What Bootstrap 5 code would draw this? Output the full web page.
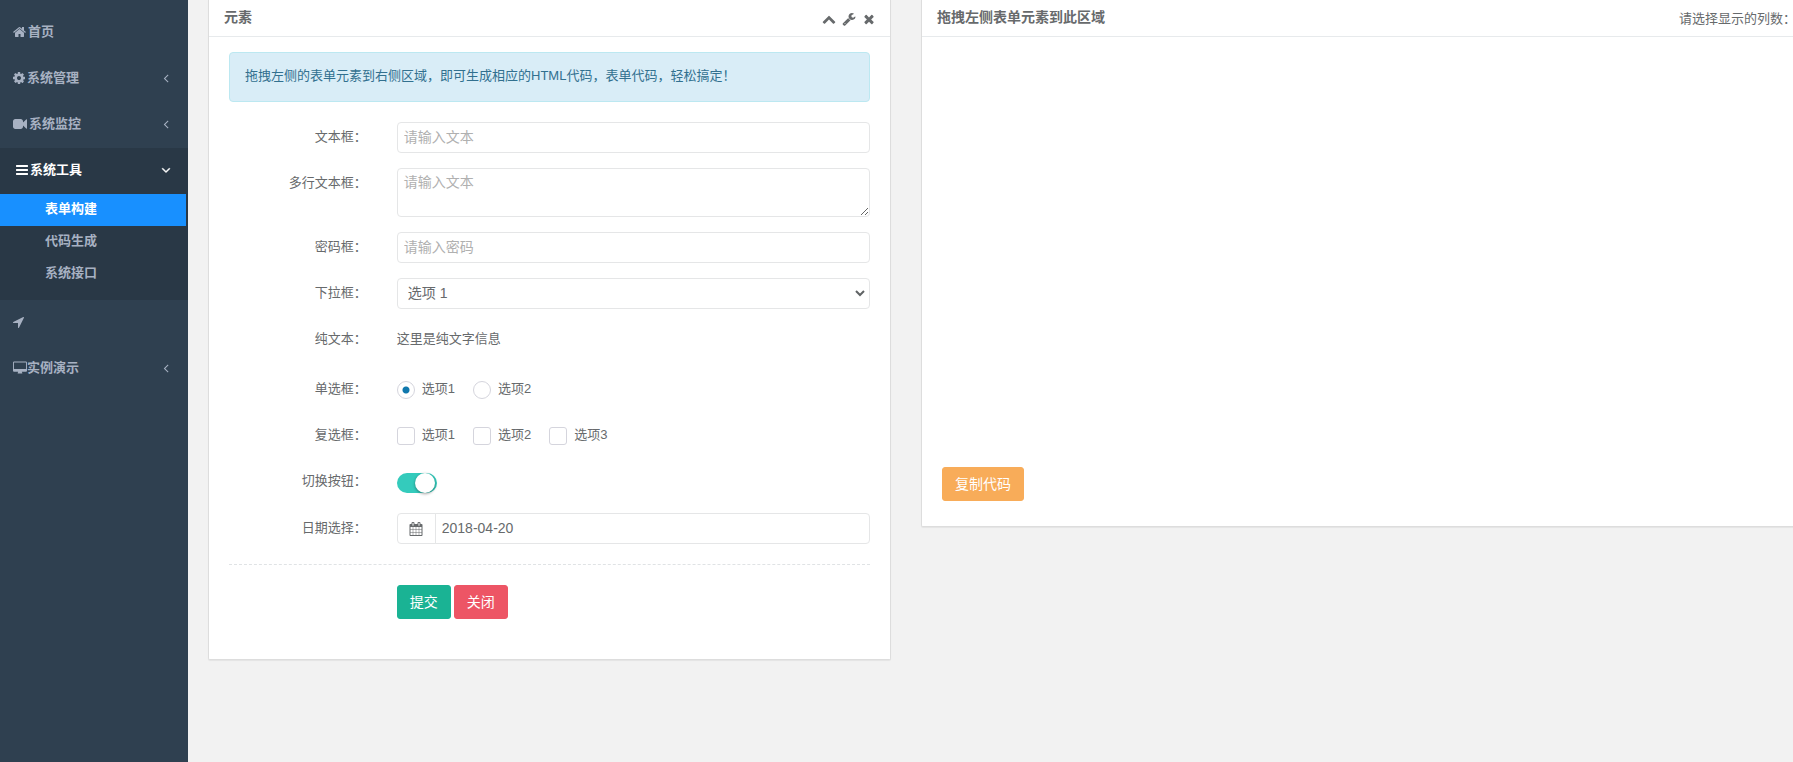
<!DOCTYPE html>
<html lang="zh-CN">
<head>
<meta charset="utf-8">
<meta name="viewport" content="width=device-width, initial-scale=1">
<title>表单构建</title>
<link href="https://cdn.jsdelivr.net/npm/bootstrap@5.3.0/dist/css/bootstrap.min.css" rel="stylesheet">
<style>
body{font-family:"Liberation Sans","Noto Sans CJK SC",sans-serif;font-size:13px;line-height:18px;color:#676a6c;background:#f2f2f2;overflow-x:hidden}
.fa-svg{height:14px;fill:currentColor;display:block;flex:none}
/* sidebar */
.side-nav{width:188px;flex:none;background:#2f4050;padding-top:10px}
.side-nav a{color:#a7b1c2;font-weight:600;text-decoration:none}
.side-link{display:flex;align-items:center;gap:2px;height:46px;padding:0 15px 2px 13px}
.side-link .caret{margin-left:auto}
.side-open{background:#293846;padding-bottom:10px}
.side-open .side-link{padding-left:16px}
.side-nav .side-open>.side-link,.side-nav .sub-link.active{color:#fff}
.sub-link{display:block;padding:6px 0 8px 45px;margin-right:2px}
.sub-link.active{background:#1890ff}
/* panels */
.page-main{display:grid;grid-template-columns:683fr 876fr;gap:30px;align-items:start;padding-left:20px;margin-right:-4px}
.ibox{background:#fff;border:1px solid #ddd;border-top:0;border-radius:0 0 2px 2px;box-shadow:0 1px 1px rgba(0,0,0,.06)}
.ibox-head{display:flex;justify-content:space-between;height:37px;padding:0 14px 0 15px;border-bottom:1px solid #e7eaec}
.ibox-head h1{font-size:14px;line-height:18px;font-weight:600;margin:8px 0 0}
.ibox-tools{display:flex;gap:6px;margin-top:12px}
.ibox-tools button{border:0;background:none;padding:0;color:inherit;height:14px}
.head-note{margin-top:10px;white-space:nowrap}
.ibox-body{padding:15px 20px 25px}
.tip{background:#d9edf7;border-color:#bce8f1;color:#31708f;padding:14px 15px 16px;margin-bottom:20px;border-radius:4px}
/* form */
.field{--bs-gutter-x:30px;margin-bottom:15px}
.field-label{text-align:right;padding-top:6px}
.field-label.low{padding-top:8px}
.plain-text{padding:6px 0 9px;margin:0}
.form-control,.form-select{font-size:14px;line-height:20px;color:#676a6c;border-color:#e5e6e7;border-radius:4px;padding:4px 6px 5px;min-height:31px}
.form-control::placeholder{color:#b0b0b0}
textarea.form-control{height:49px;min-height:49px;padding-top:3px}
.form-select{padding-left:10px;background-image:url("data:image/svg+xml,%3Csvg xmlns='http://www.w3.org/2000/svg' viewBox='0 0 10 10'%3E%3Cpath d='M1 2l4 4 4-4' fill='none' stroke='%23606365' stroke-width='2'/%3E%3C/svg%3E");background-size:10px;background-position:right 4px center}
.choices{display:flex;gap:18px;padding-top:9px;min-height:31px}
.choice{display:flex;gap:7px;height:18px}
.choice .form-check-input{width:18px;height:18px;margin:0;border:1px solid #d5d5dd;border-radius:3px}
.choice .form-check-input[type=radio]{border-radius:50%}
.choice .form-check-input[type=radio]:checked{background:radial-gradient(circle,#1078ad 3px,#fff 4px)}
.choice label{margin-top:-1px}
.toggle-row{padding-top:9px;height:34px}
.toggle{appearance:none;display:block;width:40px;height:20px;margin:0;border-radius:10px;background:#34cbbc;overflow:visible}
.toggle::before{content:"";display:block;width:20px;height:20px;margin-left:18px;border-radius:50%;background:#fff;box-shadow:0 1px 3px rgba(0,0,0,.4)}
.input-group-text{background:#fff;border-color:#e5e6e7;color:#676a6c;width:39px;padding:0;justify-content:center;border-radius:4px}
.field-line{border-top:1px dashed #e0e3e5;opacity:1;margin:20px 0}
.form-actions{display:flex;gap:3px}
.btn{font-size:14px;line-height:20px;padding:6px 12px;border-radius:3px;color:#fff;border:1px solid}
.btn-submit{background:#1ab394;border-color:#1ab394}
.btn-close-form{background:#ed5565;border-color:#ed5565}
.btn-copy{background:#f8ac59;border-color:#f8ac59}
.drop-area{min-height:415px}
</style>
</head>
<body>
<div class="d-flex min-vh-100">
  <nav class="side-nav">
    <a class="side-link" href="#"><svg class="fa-svg" width="13" viewBox="64 0 1664 1792"><path d="M1472 992v480q0 26-19 45t-45 19h-384v-384h-256v384h-384q-26 0-45-19t-19-45v-480q0-1 .5-3t.5-3l575-474 575 474q1 2 1 6zm223-69l-62 74q-8 9-21 11h-3q-13 0-21-7l-692-577-692 577q-12 8-24 7-13-2-21-11l-62-74q-8-10-7-23.5t11-21.5l719-599q32-26 76-26t76 26l244 204v-195q0-14 9-23t23-9h192q14 0 23 9t9 23v408l219 182q10 8 11 21.5t-7 23.5z"/></svg><span>首页</span></a>
    <a class="side-link" href="#"><svg class="fa-svg" width="12" viewBox="128 0 1536 1792"><path d="M1152 896q0-106-75-181t-181-75-181 75-75 181 75 181 181 75 181-75 75-181zm512-109v222q0 12-8 23t-20 13l-185 28q-19 54-39 91 35 50 107 138 10 12 10 25t-9 23q-27 37-99 108t-94 71q-12 0-26-9l-138-108q-44 23-91 38-16 136-29 186-7 28-36 28h-222q-14 0-24.5-8.5t-11.5-21.5l-28-184q-49-16-90-37l-141 107q-10 9-25 9-14 0-25-11-126-114-165-168-7-10-7-23 0-12 8-23 15-21 51-66.5t54-70.5q-27-50-41-99l-183-27q-13-2-21-12.5t-8-23.5v-222q0-12 8-23t19-13l186-28q14-46 39-92-40-57-107-138-10-12-10-24 0-10 9-23 26-36 98.5-107.5t94.5-71.5q13 0 26 10l138 107q44-23 91-38 16-136 29-186 7-28 36-28h222q14 0 24.5 8.5t11.5 21.5l28 184q49 16 90 37l142-107q9-9 24-9 13 0 25 10 129 119 165 170 7 8 7 22 0 12-8 23-15 21-51 66.5t-54 70.5q26 50 41 98l183 28q13 2 21 12.5t8 23.5z"/></svg><span>系统管理</span><svg class="fa-svg caret" width="14" viewBox="0 0 1792 1792"><path d="M1203 544q0 13-10 23l-393 393 393 393q10 10 10 23t-10 23l-50 50q-10 10-23 10t-23-10l-466-466q-10-10-10-23t10-23l466-466q10-10 23-10t23 10l50 50q10 10 10 23z"/></svg></a>
    <a class="side-link" href="#"><svg class="fa-svg" width="14" viewBox="0 0 1792 1792"><path d="M1792 352v1088q0 42-39 59-13 5-25 5-27 0-45-19l-403-403v166q0 119-84.500 203.500t-203.500 84.500h-704q-119 0-203.500-84.500t-84.500-203.500v-704q0-119 84.500-203.500t203.500-84.500h704q119 0 203.500 84.500t84.500 203.500v165l403-402q18-19 45-19 12 0 25 5 39 17 39 59z"/></svg><span>系统监控</span><svg class="fa-svg caret" width="14" viewBox="0 0 1792 1792"><path d="M1203 544q0 13-10 23l-393 393 393 393q10 10 10 23t-10 23l-50 50q-10 10-23 10t-23-10l-466-466q-10-10-10-23t10-23l466-466q10-10 23-10t23 10l50 50q10 10 10 23z"/></svg></a>
    <div class="side-open">
      <a class="side-link" href="#"><svg class="fa-svg" width="12" viewBox="128 0 1536 1792"><path d="M1664 1344v128q0 26-19 45t-45 19h-1408q-26 0-45-19t-19-45v-128q0-26 19-45t45-19h1408q26 0 45 19t19 45zm0-512v128q0 26-19 45t-45 19h-1408q-26 0-45-19t-19-45v-128q0-26 19-45t45-19h1408q26 0 45 19t19 45zm0-512v128q0 26-19 45t-45 19h-1408q-26 0-45-19t-19-45v-128q0-26 19-45t45-19h1408q26 0 45 19t19 45z"/></svg><span>系统工具</span><svg class="fa-svg caret" width="14" viewBox="128 0 1792 1792"><path stroke="currentColor" stroke-width="60" d="M1523 736q0 13-10 23l-466 466q-10 10-23 10t-23-10l-466-466q-10-10-10-23t10-23l50-50q10-10 23-10t23 10l393 393 393-393q10-10 23-10t23 10l50 50q10 10 10 23z"/></svg></a>
      <a class="sub-link active" href="#">表单构建</a>
      <a class="sub-link" href="#">代码生成</a>
      <a class="sub-link" href="#">系统接口</a>
    </div>
    <a class="side-link" href="#" aria-label="导航"><svg class="fa-svg" width="11" viewBox="192 0 1408 1792"><path d="M1593 349l-640 1280q-17 35-57 35-5 0-15-2-22-5-35.500-22.500t-13.500-39.500v-576h-576q-22 0-39.500-13.500t-22.500-35.500 4-42 29-30l1280-640q13-7 29-7 27 0 45 19 15 14 18.500 34.500t-6.500 39.500z"/></svg></a>
    <a class="side-link gap-0" href="#"><svg class="fa-svg" width="14" viewBox="-64 0 1920 1792"><path d="M1728 992v-832q0-13-9.500-22.500t-22.500-9.500h-1600q-13 0-22.500 9.500t-9.500 22.500v832q0 13 9.500 22.500t22.500 9.500h1600q13 0 22.500-9.500t9.500-22.500zm128-832v1088q0 66-47 113t-113 47h-544q0 37 16 77.500t32 71 16 43.500q0 26-19 45t-45 19h-512q-26 0-45-19t-19-45q0-14 16-44t32-70 16-78h-544q-66 0-113-47t-47-113v-1088q0-66 47-113t113-47h1600q66 0 113 47t47 113z"/></svg><span>实例演示</span><svg class="fa-svg caret" width="14" viewBox="0 0 1792 1792"><path d="M1203 544q0 13-10 23l-393 393 393 393q10 10 10 23t-10 23l-50 50q-10 10-23 10t-23-10l-466-466q-10-10-10-23t10-23l466-466q10-10 23-10t23 10l50 50q10 10 10 23z"/></svg></a>
  </nav>

  <main class="page-main flex-grow-1">
    <section class="ibox">
      <div class="ibox-head">
        <h1>元素</h1>
        <div class="ibox-tools">
          <button type="button" aria-label="折叠"><svg class="fa-svg" width="14" viewBox="0 0 1792 1792"><path d="M1683 1331l-166 165q-19 19-45 19t-45-19l-531-531-531 531q-19 19-45 19t-45-19l-166-165q-19-19-19-45.500t19-45.500l742-741q19-19 45-19t45 19l742 741q19 19 19 45.500t-19 45.500z"/></svg></button>
          <button type="button" aria-label="设置"><svg class="fa-svg" width="14" viewBox="0 0 1792 1792"><path d="M448 1472q0-26-19-45t-45-19-45 19-19 45 19 45 45 19 45-19 19-45zm644-420l-682 682q-37 37-90 37-52 0-91-37l-106-108q-38-36-38-90 0-53 38-91l681-681q39 98 114.500 173.500t173.500 114.500zm634-435q0 39-23 106-47 134-164.500 217.500t-258.500 83.500q-185 0-316.500-131.500t-131.500-316.500 131.500-316.500 316.500-131.500q58 0 121.500 16.500t107.500 46.500q16 11 16 28t-16 28l-293 169v224l193 107q5-3 79-48.500t135.500-81 70.500-35.500q15 0 23.500 10t8.500 25z"/></svg></button>
          <button type="button" aria-label="关闭面板"><svg class="fa-svg" width="14" viewBox="0 0 1792 1792"><path d="M1490 1322q0 40-28 68l-136 136q-28 28-68 28t-68-28l-294-294-294 294q-28 28-68 28t-68-28l-136-136q-28-28-28-68t28-68l294-294-294-294q-28-28-28-68t28-68l136-136q28-28 68-28t68 28l294 294 294-294q28-28 68-28t68 28l136 136q28 28 28 68t-28 68l-294 294 294 294q28 28 28 68z"/></svg></button>
        </div>
      </div>
      <div class="ibox-body">
        <div class="alert tip">拖拽左侧的表单元素到右侧区域，即可生成相应的HTML代码，表单代码，轻松搞定！</div>
        <form>
          <div class="row field">
            <label class="col-3 field-label" for="f-text">文本框：</label>
            <div class="col-9"><input class="form-control" id="f-text" type="text" placeholder="请输入文本"></div>
          </div>
          <div class="row field">
            <label class="col-3 field-label" for="f-area">多行文本框：</label>
            <div class="col-9"><textarea class="form-control" id="f-area" placeholder="请输入文本"></textarea></div>
          </div>
          <div class="row field">
            <label class="col-3 field-label" for="f-pass">密码框：</label>
            <div class="col-9"><input class="form-control" id="f-pass" type="password" placeholder="请输入密码"></div>
          </div>
          <div class="row field">
            <label class="col-3 field-label" for="f-select">下拉框：</label>
            <div class="col-9"><select class="form-select" id="f-select"><option>选项 1</option><option>选项 2</option></select></div>
          </div>
          <div class="row field">
            <div class="col-3 field-label">纯文本：</div>
            <div class="col-9"><p class="plain-text">这里是纯文字信息</p></div>
          </div>
          <div class="row field" role="radiogroup" aria-labelledby="l-radio">
            <div class="col-3 field-label low" id="l-radio">单选框：</div>
            <div class="col-9 choices">
              <div class="choice"><input class="form-check-input" type="radio" name="r" id="r1" checked><label for="r1">选项1</label></div>
              <div class="choice"><input class="form-check-input" type="radio" name="r" id="r2"><label for="r2">选项2</label></div>
            </div>
          </div>
          <div class="row field" role="group" aria-labelledby="l-check">
            <div class="col-3 field-label low" id="l-check">复选框：</div>
            <div class="col-9 choices">
              <div class="choice"><input class="form-check-input" type="checkbox" id="c1"><label for="c1">选项1</label></div>
              <div class="choice"><input class="form-check-input" type="checkbox" id="c2"><label for="c2">选项2</label></div>
              <div class="choice"><input class="form-check-input" type="checkbox" id="c3"><label for="c3">选项3</label></div>
            </div>
          </div>
          <div class="row field">
            <label class="col-3 field-label low" for="f-toggle">切换按钮：</label>
            <div class="col-9 toggle-row"><input class="toggle" id="f-toggle" type="checkbox" role="switch" checked></div>
          </div>
          <div class="row field mb-0">
            <label class="col-3 field-label" for="f-date">日期选择：</label>
            <div class="col-9">
              <div class="input-group">
                <span class="input-group-text"><svg class="fa-svg" width="14" viewBox="0 0 1792 1792"><path d="M192 1664h288v-288h-288v288zm352 0h320v-288h-320v288zm-352-352h288v-320h-288v320zm352 0h320v-320h-320v320zm-352-384h288v-288h-288v288zm736 736h320v-288h-320v288zm-384-736h320v-288h-320v288zm768 736h288v-288h-288v288zm-384-352h320v-320h-320v320zm-352-864v-288q0-13-9.500-22.500t-22.500-9.500h-64q-13 0-22.500 9.500t-9.500 22.500v288q0 13 9.500 22.500t22.500 9.500h64q13 0 22.500-9.500t9.500-22.500zm736 864h288v-320h-288v320zm-384-384h320v-288h-320v288zm384 0h288v-288h-288v288zm32-480v-288q0-13-9.500-22.500t-22.500-9.500h-64q-13 0-22.500 9.500t-9.500 22.500v288q0 13 9.500 22.500t22.500 9.500h64q13 0 22.500-9.500t9.500-22.500zm384-64v1280q0 52-38 90t-90 38h-1408q-52 0-90-38t-38-90v-1280q0-52 38-90t90-38h128v-96q0-66 47-113t113-47h64q66 0 113 47t47 113v96h384v-96q0-66 47-113t113-47h64q66 0 113 47t47 113v96h128q52 0 90 38t38 90z"/></svg></span>
                <input class="form-control" id="f-date" type="text" value="2018-04-20">
              </div>
            </div>
          </div>
          <hr class="field-line">
          <div class="row field">
            <div class="col-9 offset-3 form-actions">
              <button class="btn btn-submit" type="submit">提交</button>
              <button class="btn btn-close-form" type="button">关闭</button>
            </div>
          </div>
        </form>
      </div>
    </section>

    <section class="ibox">
      <div class="ibox-head pe-0">
        <h1>拖拽左侧表单元素到此区域</h1>
        <div class="head-note">请选择显示的列数：</div>
      </div>
      <div class="ibox-body">
        <div class="drop-area"></div>
        <button class="btn btn-copy" type="button">复制代码</button>
      </div>
    </section>
  </main>
</div>
<script src="https://cdn.jsdelivr.net/npm/bootstrap@5.3.0/dist/js/bootstrap.bundle.min.js"></script>
</body>
</html>
